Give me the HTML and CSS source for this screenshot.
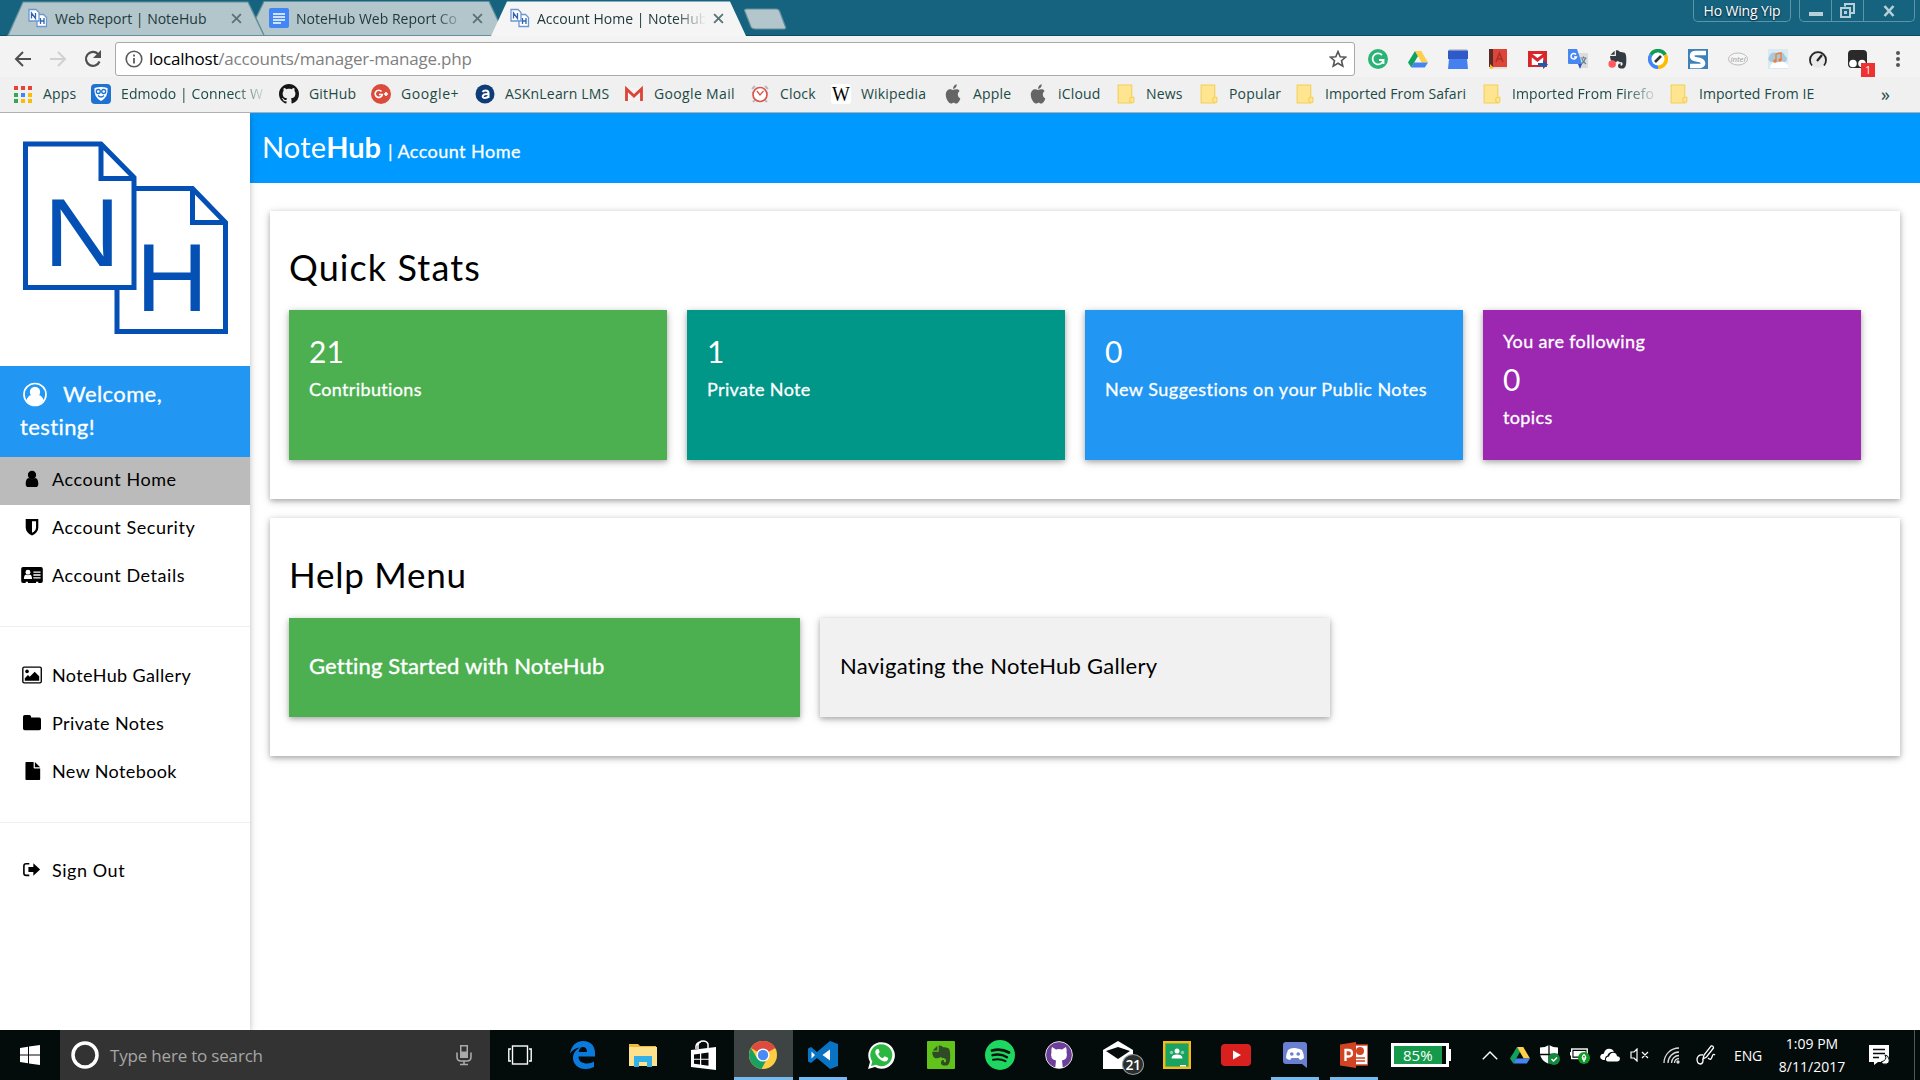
FILE: index.html
```html
<!DOCTYPE html>
<html lang="en">
<head>
<meta charset="utf-8">
<title>Account Home | NoteHub</title>
<link rel="stylesheet" href="styles.css">
</head>
<body>
<svg class="defs" aria-hidden="true">
  <symbol id="nh" viewBox="0 0 20 20"><path d="M1 1.500h7l3 3V13H1zM11 6.500h4.500l3 3V18.500H9V13" fill="#fff" stroke="#6d97cf" stroke-width="1.300"/><path d="M3.500 10.500V5l4 5.500V5M12.500 16v-6M16 16v-6M12.500 13H16" fill="none" stroke="#2c66b5" stroke-width="1.300"/></symbol>
  <symbol id="x" viewBox="0 0 10 10"><path d="M1 1l8 8M9 1L1 9" stroke="#5b7377" stroke-width="1.700"/></symbol>
  <symbol id="drive" viewBox="0 0 20 20"><path d="M7 2L0 13.500 3.300 18.500 10 7z" fill="#11a15e"/><path d="M7 2h6.300L20 13.500h-6.300z" fill="#ffcf48"/><path d="M6 13.500h14L16.800 18.500H3.300z" fill="#4485f3"/></symbol>
  <symbol id="folder" viewBox="0 0 17 19"><path d="M1 1h13v11.500h2v3.500q0 2-2 2H1z" fill="#ffe58f" stroke="#f2cf57"/><path d="M14 12.500q-2 0-2 2.500t2 2.500" fill="none" stroke="#f2cf57"/></symbol>
  <symbol id="apple" viewBox="0 0 14 18"><path d="M7 5.500C4.500 3.500.5 5 .5 9.500S3.500 17.500 5 17.500s1.500-.7 2.500-.7 1.200.7 2.600.7 3-2.500 3.500-4.500C11 12 10.500 7.800 13 6.300 11.500 4.200 9 4.700 7 5.500zM7 4.500C7 2.500 8.500.5 10.300.3 10.500 2.500 9 4.500 7 4.500z" fill="#656565"/></symbol>
  <symbol id="cat" viewBox="0 0 16 16"><path d="M8 0C3.580 0 0 3.580 0 8c0 3.540 2.290 6.530 5.470 7.590.4.070.55-.17.55-.38 0-.19-.01-.82-.01-1.490-2.010.37-2.530-.49-2.690-.94-.09-.23-.48-.94-.82-1.130-.28-.15-.68-.52-.01-.53.63-.01 1.080.58 1.230.82.72 1.210 1.870.87 2.330.66.07-.52.28-.87.51-1.070-1.780-.2-3.640-.89-3.640-3.950 0-.87.31-1.590.82-2.150-.08-.2-.36-1.020.08-2.120 0 0 .67-.21 2.200.82.64-.18 1.320-.27 2-.27s1.360.09 2 .27c1.530-1.040 2.200-.82 2.200-.82.44 1.100.16 1.920.08 2.120.51.56.82 1.270.82 2.150 0 3.070-1.870 3.750-3.650 3.950.29.25.54.73.54 1.480 0 1.070-.01 1.930-.01 2.200 0 .21.15.46.55.38A8.010 8.010 0 0016 8c0-4.420-3.580-8-8-8z"/></symbol>
  <symbol id="elephant" viewBox="0 0 24 24"><path d="M8 2L3 7h5zM9.500 1.500V8.500H2.500C2.500 12 4 15.500 6 15.500c3 .5 5-.5 6-1.500.5 2 3.500 1.500 4.500 2 1.500.5 1.500 4-.5 4-1 0-1.500-1-.5-2.500-2.500-.5-3.500 1-3.500 3 0 2.500 2 3 5 3 4 0 5-4 5-11 0-4-.5-7-2-8-2-.8-4-.8-5.500-1-1-1.500-3-2-5-2z"/></symbol>
</svg>

<div class="tabstrip">
  <svg class="tabshapes" viewBox="0 0 800 36" aria-hidden="true">
    <g stroke="#648f9c" stroke-width="1.200">
      <path d="M264 1.500H489L505 35.500H264L256 18z" fill="#b2c6cb"/>
      <path d="M8 35.500L23 2H248L264 35.500z" fill="#b2c6cb"/>
      <path d="M744.500 10.500q0-1.500 2-1.500h30q2 0 3 2l6 16q.5 2-1.500 2h-29q-3 0-4-2z" fill="#b2c6cb"/>
    </g>
    <path d="M491 36L507 1.500H730L746 36z" fill="#f5f5f5"/>
  </svg>
  <div class="tab"><svg class="fav"><use href="#nh"/></svg><span class="tab-t">Web Report | NoteHub</span><svg class="close"><use href="#x"/></svg></div>
  <div class="tab"><svg class="fav" viewBox="0 0 20 20"><rect width="20" height="20" rx="2" fill="#4285f4"/><path d="M4 6h12M4 9h12M4 12h12M4 15h8" stroke="#fff" stroke-width="1.500"/></svg><span class="tab-t fade">NoteHub Web Report Co</span><svg class="close"><use href="#x"/></svg></div>
  <div class="tab"><svg class="fav"><use href="#nh"/></svg><span class="tab-t fade">Account Home | NoteHub</span><svg class="close"><use href="#x"/></svg></div>
  <div class="wincontrols">
    <div class="user">Ho Wing Yip</div>
    <div class="winbtns">
      <span><svg width="14" height="12"><path d="M0 9h14" stroke="#b7d0d8" stroke-width="4"/></svg></span>
      <span><svg width="15" height="15" fill="none" stroke="#b7d0d8" stroke-width="2"><path d="M5 3.500V1h9v9h-3"/><rect x="1" y="5" width="9" height="9"/><rect x="5" y="9" width="1" height="1"/></svg></span>
      <span><svg width="12" height="12"><path d="M1.500 1l9 10M10.500 1l-9 10" stroke="#b7d0d8" stroke-width="2.600"/></svg></span>
    </div>
  </div>
</div>

<div class="toolbar">
  <svg class="nav" viewBox="0 0 20 20"><path d="M18 10H3M10 3l-7 7 7 7" fill="none" stroke="#4f4f4f" stroke-width="2"/></svg>
  <svg class="nav" viewBox="0 0 20 20"><path d="M2 10h15M10 3l7 7-7 7" fill="none" stroke="#d0d0d0" stroke-width="2"/></svg>
  <svg class="nav" viewBox="0 0 20 20"><path d="M16.500 12.500A7 7 0 1 1 15 5" fill="none" stroke="#4f4f4f" stroke-width="2.200"/><path d="M18 1v8h-8z" fill="#4f4f4f"/></svg>
  <div class="omnibox">
    <svg width="18" height="18" viewBox="0 0 18 18"><circle cx="9" cy="9" r="7.800" fill="none" stroke="#5a5a5a" stroke-width="1.600"/><path d="M9 8v5.500M9 4.500v2" stroke="#5a5a5a" stroke-width="1.800"/></svg>
    <span class="url"><b>localhost</b>/accounts/manager-manage.php</span>
    <svg width="18" height="18" viewBox="0 0 18 18"><path d="M9 1.500l2.200 5.200 5.500.4-4.200 3.600 1.300 5.500L9 13.300l-4.800 2.900 1.300-5.500L1.300 7.100l5.500-.4z" fill="none" stroke="#555" stroke-width="1.600"/></svg>
  </div>
  <div class="exts">
    <svg viewBox="0 0 20 20"><circle cx="10" cy="10" r="10" fill="#27b474"/><path d="M14 6A5.500 5.500 0 1 0 15.500 11H11M15.500 11v4" fill="none" stroke="#fff" stroke-width="1.800"/></svg>
    <svg><use href="#drive"/></svg>
    <svg viewBox="0 0 20 20"><path d="M1 0h18v3H1z" fill="#c5cad4"/><path d="M0 1.500h20V10H0z" fill="#3059c8"/><path d="M1 10h18l1 10H0z" fill="#4480ee"/></svg>
    <svg viewBox="0 0 20 20"><path d="M1 0h4v20H1z" fill="#5a2a26"/><path d="M5 0h14v18H5z" fill="#dd4538"/><path d="M1 18h18v2H1z" fill="#e9e1de"/><path d="M2 15l4 4-4 1z" fill="#fbc02d"/><path d="M8 13l3.500-9L15 13M9.500 10h4" fill="none" stroke="#a9312a" stroke-width="1.500"/></svg>
    <svg viewBox="0 0 20 20"><rect y="2" width="19" height="16" fill="#d8262a"/><path d="M3.500 5h12v11h-12z" fill="#fff"/><path d="M2 17V5l7.500 6L17 5v12" fill="none" stroke="#d8262a" stroke-width="3"/><path d="M10 14h5v-3l5 4.500-5 4.500v-3h-5z" fill="#2a56a8"/></svg>
    <svg viewBox="0 0 20 20"><path d="M9 4h11v15h-9z" fill="#dcdcdc"/><path d="M0 0h9l5 15H1q-1 0-1-1z" fill="#4687f1"/><path d="M10 15h4l-2 5z" fill="#2a56c0"/><path d="M8 5.500A2.800 2.800 0 1 0 8.500 8H6" fill="none" stroke="#fff" stroke-width="1.400"/><path d="M12.500 9h6M15.500 7.500V9M17.500 9q-1 4-4 6M14 10q1 3 4 5" fill="none" stroke="#607d8b" stroke-width="1.100"/></svg>
    <svg viewBox="0 0 24 24"><use href="#elephant" fill="#333b40"/><circle cx="5" cy="18" r="4.500" fill="#ff5a5f"/></svg>
    <svg viewBox="0 0 20 20"><g fill="none" stroke-width="4"><path d="M3 6A8 8 0 0 1 17 6" stroke="#0f9d58"/><path d="M17 6A8 8 0 0 1 10 18" stroke="#ffbb00"/><path d="M10 18A8 8 0 0 1 3 6" stroke="#4285f4"/></g><circle cx="10" cy="10" r="6.500" fill="#fff"/><path d="M7 13l6-6" stroke="#333" stroke-width="2.600"/></svg>
    <svg viewBox="0 0 20 20"><rect width="20" height="20" fill="#3e80b8"/><path d="M18 4H8Q4 4 4 7t5 3.500 6 3-3 3.500H2" fill="none" stroke="#fff" stroke-width="4.500"/></svg>
    <svg viewBox="0 0 20 20"><ellipse cx="10" cy="10" rx="9.500" ry="6" fill="#f6f6f6" stroke="#bbb"/><text x="2.500" y="12.500" class="intel" textLength="15" lengthAdjust="spacingAndGlyphs">intel</text></svg>
    <svg viewBox="0 0 20 20"><path d="M0 0h20v20H0z" fill="#d8eaf4"/><path d="M1 8q2-6 7-4 7-3 9 3 4 3 0 6H3q-4-2-2-5z" fill="#a9c8dc"/><path d="M2 18q1-5 7-4 6-4 11 2v3H2z" fill="#fff"/><path d="M8 12V5l5-1v7" fill="none" stroke="#f47b2c" stroke-width="1.300"/><circle cx="7" cy="12" r="1.700" fill="#f47b2c"/><circle cx="12" cy="11" r="1.700" fill="#f47b2c"/></svg>
    <svg viewBox="0 0 20 20"><circle cx="10" cy="10" r="9" fill="#e9e9e9"/><path d="M4 16.500A8 8 0 1 1 16 16.500" fill="none" stroke="#222" stroke-width="1.800"/><path d="M9 12l5-6" stroke="#222" stroke-width="2.200"/></svg>
    <div class="tamper"><svg viewBox="0 0 20 20"><rect x="0" y="1" width="19" height="18" rx="4" fill="#2a2a2a"/><circle cx="5" cy="14.500" r="3.800" fill="#fff"/><circle cx="14" cy="14.500" r="3.800" fill="#fff"/></svg><span class="badge">1</span></div>
  </div>
  <svg class="dots" width="4" height="20"><g fill="#555"><circle cx="2" cy="4" r="2"/><circle cx="2" cy="10" r="2"/><circle cx="2" cy="16" r="2"/></g></svg>
</div>

<div class="bookmarks">
  <div><svg viewBox="0 0 20 20"><g fill="#ea4335"><path d="M1 2h4v4H1zM8 2h4v4H8zM15 2h4v4h-4z"/></g><path d="M1 9h4v4H1z" fill="#34a853"/><path d="M8 9h4v4H8z" fill="#4285f4"/><path d="M15 9h4v4h-4zM8 15h4v4H8zM15 15h4v4h-4z" fill="#fbbc05"/><path d="M1 15h4v4H1z" fill="#34a853"/></svg>Apps</div>
  <div><svg viewBox="0 0 20 20"><rect width="20" height="20" rx="4" fill="#1e73d2"/><path d="M10 17Q2.500 13 3.500 4q6.500-2 13 0 1 9-6.500 13z" fill="#fff"/><g fill="none" stroke="#1e73d2" stroke-width="1.300"><circle cx="7.300" cy="7.500" r="2"/><circle cx="12.700" cy="7.500" r="2"/><path d="M7 11.500q3 3 6 0"/></g></svg><span class="cut">Edmodo | Connect W</span></div>
  <div><svg viewBox="0 0 16 16"><use href="#cat" fill="#171515"/></svg>GitHub</div>
  <div class="gplus"><svg viewBox="0 0 20 20"><circle cx="10" cy="10" r="10" fill="#db4a3a"/><path d="M10.500 7.500A3.600 3.600 0 1 0 11.300 10.500H8M13 10h4M15 8v4" fill="none" stroke="#fff" stroke-width="1.700"/></svg>Google+</div>
  <div><svg viewBox="0 0 20 20"><circle cx="10" cy="10" r="9.500" fill="#0d3c78"/><path d="M13.500 14V9q0-2.500-3-2.500-2 0-3 1.500M13.500 10c-7-.5-7 4-3.500 4q2.500 0 3.500-2" fill="none" stroke="#fff" stroke-width="2"/></svg>ASKnLearn LMS</div>
  <div class="gmail"><svg viewBox="0 0 20 20"><path d="M1 4h18v13H1z" fill="#f4f4f4"/><path d="M2.500 17V5l7.500 7 7.500-7v12" fill="none" stroke="#db4437" stroke-width="2.800"/></svg>Google Mail</div>
  <div><svg viewBox="0 0 20 20"><path d="M2 5l3-3M18 5l-3-3M5 16l-2 2M15 16l2 2" stroke="#bbb" stroke-width="2"/><circle cx="10" cy="10.500" r="7" fill="#fff" stroke="#d8574d" stroke-width="1.700"/><path d="M7 7l3 4 3.500-4" fill="none" stroke="#d8574d" stroke-width="1.300"/></svg>Clock</div>
  <div><svg viewBox="0 0 20 20"><rect width="20" height="20" rx="3" fill="#fff"/><text x="1" y="16.500" class="wiki" textLength="18" lengthAdjust="spacingAndGlyphs">W</text></svg>Wikipedia</div>
  <div><svg><use href="#apple"/></svg>Apple</div>
  <div><svg><use href="#apple"/></svg>iCloud</div>
  <div><svg><use href="#folder"/></svg>News</div>
  <div><svg><use href="#folder"/></svg>Popular</div>
  <div class="safari"><svg><use href="#folder"/></svg>Imported From Safari</div>
  <div><svg><use href="#folder"/></svg><span class="cut">Imported From Firefo</span></div>
  <div class="safari"><svg><use href="#folder"/></svg>Imported From IE</div>
  <div class="more">»</div>
</div>

<div class="page">
  <aside class="sidebar">
    <div class="logo">
      <svg width="250" height="253" viewBox="0 113 250 253">
        <g fill="none" stroke="#0450b4" stroke-width="5">
          <path d="M136 188.500h56.500L225.500 222.500V331.500H117V290M192.500 188.500v34H225"/>
          <path d="M25.500 144H101l33 33.500V287.500H25.500zM101 144v34.500h33"/>
        </g>
        <text class="mark" x="43.500" y="266" textLength="77" lengthAdjust="spacingAndGlyphs">N</text>
        <text class="mark" x="136" y="311" textLength="72" lengthAdjust="spacingAndGlyphs">H</text>
      </svg>
    </div>
    <div class="welcome"><svg viewBox="0 0 24 24"><circle cx="12" cy="12" r="11" fill="none" stroke="#fff" stroke-width="1.700"/><circle cx="12" cy="9.500" r="5.200" fill="#fff"/><path d="M3.500 18q1-5 5-5.500 3.500 3 7 0 4 .5 5 5.500-3 5-8.500 5T3.500 18z" fill="#fff"/></svg>Welcome,<br>testing!</div>
    <nav>
      <a class="on"><svg viewBox="0 0 24 20"><circle cx="12" cy="5.500" r="4.600"/><path d="M5 15.500Q5 9.500 8.500 9q3.500 2.500 7 0 3.500.5 3.500 6.500 0 3.500-3 3.500H8q-3 0-3-3.500z"/></svg>Account Home</a>
      <a><svg viewBox="0 0 24 20"><path d="M5 1h14v9.500Q19 16 12 19.500 5 16 5 10.500z"/><path d="M12 3.500h4.500v7q0 3.500-4.500 6z" fill="#fff"/></svg>Account Security</a>
      <a><svg viewBox="0 0 24 20"><path d="M0 3q0-2 2-2h20q2 0 2 2v14q0 2-2 2h-3v-1.500h-2.500V19h-9v-1.500H5V19H2q-2 0-2-2z"/><circle cx="7.500" cy="7" r="2.700" fill="#fff"/><path d="M3 14.500q0-4.500 2.500-5 2 1.500 4 0 2.500.5 2.500 5zM13.500 6h8v1.500h-8zM13.500 9.200h8v1.500h-8zM13.500 12.400h8v1.500h-8z" fill="#fff"/></svg>Account Details</a>
      <hr>
      <a class="snug"><svg viewBox="0 0 24 20"><rect x="1.800" y="1.200" width="20.500" height="17.500" rx="1.500" fill="none" stroke="#000" stroke-width="1.500"/><circle cx="6.500" cy="6" r="2"/><path d="M4 16.500v-3l3.500-3.500 2 2 5.500-5.500 5 5v5z"/></svg>NoteHub Gallery</a>
      <a class="snug"><svg viewBox="0 0 24 20"><path d="M2 3q0-2 2-2h5q2 0 2 2v1h9q2 0 2 2v10q0 2-2 2H4q-2 0-2-2z"/></svg>Private Notes</a>
      <a class="snug"><svg viewBox="0 0 24 22"><path d="M4 1q0-1 1-1h9v7q0 1 1 1h7v13q0 1-1 1H5q-1 0-1-1zM15.500 0L22 6.500h-6.500z"/></svg>New Notebook</a>
      <hr>
      <a><svg viewBox="0 0 24 20"><path d="M9 3H5.500Q3 3 3 5.500v8Q3 16 5.500 16H9" fill="none" stroke="#000" stroke-width="1.800"/><path d="M8 6.800h5.500V2.500L21 9.500l-7.500 7v-4.300H8z"/></svg>Sign Out</a>
    </nav>
  </aside>
  <main>
    <header><span class="brand">Note<b>Hub</b></span><span class="crumb">| Account Home</span></header>
    <section class="card">
      <h2 class="qs">Quick Stats</h2>
      <div class="stats">
        <div class="tile green"><div class="num">21</div><div class="lbl">Contributions</div></div>
        <div class="tile teal"><div class="num">1</div><div class="lbl">Private Note</div></div>
        <div class="tile blue"><div class="num">0</div><div class="lbl wide">New Suggestions on your Public Notes</div></div>
        <div class="tile purple"><div class="lbl top">You are following</div><div class="num">0</div><div class="lbl">topics</div></div>
      </div>
    </section>
    <section class="card help">
      <h2>Help Menu</h2>
      <div class="guides">
        <div class="guide green">Getting Started with NoteHub</div>
        <div class="guide grey">Navigating the NoteHub Gallery</div>
      </div>
    </section>
  </main>
</div>

<div class="taskbar">
  <div class="start"><svg width="20" height="20" viewBox="0 0 20 20"><path d="M0 3l8-1.200V9.500H0zM9 1.600L20 0v9.500H9zM0 10.500h8v7.700L0 17zM9 10.500h11V20L9 18.400z" fill="#fff"/></svg></div>
  <div class="search"><svg width="28" height="28" viewBox="0 0 28 28"><circle cx="14" cy="14" r="12" fill="none" stroke="#fff" stroke-width="3.500"/></svg><span>Type here to search</span><svg width="16" height="22" viewBox="0 0 16 22"><rect x="4" y="1" width="8" height="13" fill="#aaa"/><rect x="5.500" y="2.500" width="5" height="5" fill="#333"/><path d="M1 8.500v4.500q0 4 4 4h6q4 0 4-4V8.500M8 17v4M4 20.500h8" fill="none" stroke="#aaa" stroke-width="1.600"/></svg></div>
  <div class="taskview"><svg width="24" height="20" viewBox="0 0 24 20" fill="none" stroke="#fff" stroke-width="1.400"><rect x="4.500" y="1" width="15" height="18"/><path d="M3 4H.8v12H3M21 4h2.200v12H21"/></svg></div>
  <div><svg width="26" height="28" viewBox="0 0 26 28"><path d="M0 12.500C1.500 4 7 0 13 0c8 0 12 5.500 12 12v3.500H8.500c0 5 4 7 8.500 7 3 0 5.500-1 7-2v5.500q-3.500 2-8.500 2C8 28 3 23 3 17c0-5 3-8.500 7-10.500C6 6.500 2.500 9 0 12.500zM8.700 11H17c0-3.500-1.500-5-4-5s-4 2-4.300 5z" fill="#0a7bdc"/></svg></div>
  <div><svg width="28" height="24" viewBox="0 0 28 24"><path d="M0 1h9l2 2h16v20H0z" fill="#f0bb3b"/><path d="M0 4h28v19H0z" fill="#fde18c"/><path d="M5 24V13h18v11h-5v-5h-8v5z" fill="#32b1e8"/></svg></div>
  <div><svg width="28" height="30" viewBox="0 0 28 30"><path d="M1 10l25-3v23L1 27z" fill="#fff"/><path d="M8 9V5q1-4 5-4t5 3v4M6 9V6q1-4 5-4" fill="none" stroke="#fff" stroke-width="1.500"/><path d="M4 14.500l6-.8v5H4zM11.200 13.500l7.300-1v6.200h-7.300zM4 19.800h6v4.800l-6-.8zM11.200 19.800h7.300v6l-7.300-1z" fill="#050b0b"/></svg></div>
  <div class="active run"><svg width="28" height="28" viewBox="0 0 28 28"><circle cx="14" cy="14" r="14" fill="#ffcd41"/><path d="M14 14L2 7a14 14 0 0 1 24.300 0z" fill="#dd4b3e"/><path d="M2 7A14 14 0 0 0 12.500 28L18 18 8 17z" fill="#1aa15f"/><circle cx="14" cy="14" r="6.600" fill="#fff"/><circle cx="14" cy="14" r="5.200" fill="#4a8af4"/></svg></div>
  <div class="run"><svg width="30" height="28" viewBox="0 0 30 28"><path d="M22 0l8 3v22l-8 3L9 17l-6 5-3-1.500V7.500L3 6l6 5z" fill="#0a74c4"/><path d="M22 8.500L14.500 14l7.500 5.500zM3.500 10.500v7L7 14z" fill="#fff"/></svg></div>
  <div><svg width="27" height="27" viewBox="0 0 27 27"><path d="M0 27l2-7A13.300 13.300 0 1 1 7 25z" fill="#fff"/><path d="M3 24l1.300-4.500A11 11 0 1 1 8 22.800z" fill="#2cb742"/><path d="M9 7q-2.500 1.500-1.300 5 3 6 8.500 7.500 3 .5 4-2.500l-.3-1.200-3.200-1.500-2 2q-3-1-4.500-4.300l1.500-2L10.500 7z" fill="#fff"/></svg></div>
  <div><svg width="28" height="28" viewBox="0 0 28 28"><rect width="28" height="28" rx="1" fill="#62c21c"/><svg x="3" y="3" width="22" height="22" viewBox="0 0 24 24"><use href="#elephant" fill="#2e4a26"/></svg></svg></div>
  <div><svg width="30" height="30" viewBox="0 0 30 30"><circle cx="15" cy="15" r="15" fill="#1ed760"/><g fill="none" stroke="#0a130d" stroke-linecap="round"><path d="M7 10.500q9-2.500 17 2" stroke-width="2.800"/><path d="M7.500 15.200q8-2 14.500 2" stroke-width="2.400"/><path d="M8 19.700q7-1.500 12.500 1.500" stroke-width="2"/></g></svg></div>
  <div><svg width="28" height="28" viewBox="0 0 28 28"><circle cx="14" cy="14" r="13.400" fill="#6e3f9a" stroke="#ddd"/><path d="M7 6l4 2.500q3-.8 6 0L21 6q1 3 .5 5 2 7-4.500 8.500l.8 7.500h-7.600l.8-7.500Q4.500 18 6.500 11 6 9 7 6z" fill="#fff"/></svg></div>
  <div class="mail"><svg width="30" height="28" viewBox="0 0 30 28"><path d="M0 9L15 0l15 9v19H0z" fill="#fff"/><path d="M3 10l12 8 12-8-12-4z" fill="#050b0b"/></svg><span>21</span></div>
  <div><svg width="28" height="28" viewBox="0 0 28 28"><rect x="1.200" y="1.200" width="25.600" height="25.600" fill="#1aa260" stroke="#f5ba15" stroke-width="2.400"/><g fill="#fff"><circle cx="14" cy="10" r="2.500"/><path d="M8.500 17.500q0-4 5.500-4t5.500 4z"/><path d="M17 24h6v1.500h-6z"/></g><g fill="#8cd0b0"><circle cx="8.500" cy="11.500" r="1.700"/><circle cx="19.500" cy="11.500" r="1.700"/></g></svg></div>
  <div><svg width="30" height="22" viewBox="0 0 30 22"><rect width="30" height="22" rx="4" fill="#d8211f"/><path d="M12 6.500v9l8-4.500z" fill="#fff"/></svg></div>
  <div class="run"><svg width="24" height="26" viewBox="0 0 24 26"><path d="M3 0h18q3 0 3 3v23l-5-4H3q-3 0-3-3V3q0-3 3-3z" fill="#6a7fd0"/><path d="M5 8q3-2.500 7-2t7 2q2 4 2 8-2 2-4 2l-1.500-2h-7L7 18q-2 0-4-2 0-4 2-8z" fill="#fff"/><circle cx="8.800" cy="12" r="1.800" fill="#6a7fd0"/><circle cx="15.200" cy="12" r="1.800" fill="#6a7fd0"/></svg></div>
  <div class="run"><svg width="28" height="26" viewBox="0 0 28 26"><path d="M14 3h14v20H14z" fill="#fff" stroke="#d04423" stroke-width="1.500"/><circle cx="20" cy="9" r="4" fill="#d04423"/><path d="M16 16h9M16 19h9" stroke="#d04423" stroke-width="1.500"/><path d="M0 2.500L16 0v26L0 23.500z" fill="#d04423"/><path d="M5.500 19V8h3q3.500 0 3.500 3.300T8.500 14.500h-3" fill="none" stroke="#fff" stroke-width="2.300"/></svg></div>
  <div class="battery"><span>85%</span><i></i></div>
  <div><svg width="16" height="9"><path d="M.8 8.200L8 1l7.200 7.200" fill="none" stroke="#fff" stroke-width="1.400"/></svg></div>
  <div><svg width="20" height="20"><use href="#drive"/></svg></div>
  <div><svg width="20" height="20" viewBox="0 0 20 20"><path d="M9 0q4 2.500 9 2.500V9q-1 7-9 10Q1 16 0 9V2.500Q5 2.500 9 0z" fill="#fff"/><path d="M9 0v19M0 9.500h18" stroke="#050b0b" stroke-width="1.300"/><circle cx="14" cy="14" r="6" fill="#128a3e"/><path d="M11.500 14l2 2 3.500-3.500" fill="none" stroke="#fff" stroke-width="1.400"/></svg></div>
  <div><svg width="20" height="18" viewBox="0 0 20 18"><rect x="1.700" y="3" width="15.500" height="9.500" fill="none" stroke="#fff" stroke-width="1.400"/><path d="M3.500 5h12v5.500h-12zM0 6h1.500v3.500H0z" fill="#fff"/><circle cx="14" cy="12" r="6" fill="#0f9a24"/><path d="M14 8.500q3.500 3 0 6-3.500-3 0-6zM14 11v5" fill="none" stroke="#fff" stroke-width="1.200"/></svg></div>
  <div><svg width="20" height="14" viewBox="0 0 20 14"><path d="M3 12Q-.5 11 .3 8q1-2.500 3.500-2.200Q5 .5 9.500.8q3 0 4.500 3-5-.5-6.500 3.700-3 .8-2.500 4.500z" fill="#fff"/><path d="M8 13.500q-2.500-.5-2-3 .7-2 3-2 1-4 4.500-3.800 3 .3 3.500 3.500 3 .3 3 2.800-.3 2-2.500 2.500z" fill="#fff"/></svg></div>
  <div><svg width="19" height="14" viewBox="0 0 19 14" fill="none" stroke="#fff" stroke-width="1.200"><path d="M1 4h3l3-3v12L4 10H1zM12 4l6 6M18 4l-6 6"/></svg></div>
  <div><svg width="17" height="17" viewBox="0 0 17 17" fill="none" stroke="#ddd" stroke-width="1.300"><path d="M1 16A15 15 0 0 1 16 1M5 16A11 11 0 0 1 16 5M8.500 16A7.500 7.500 0 0 1 16 8.500M11.500 16A4.500 4.500 0 0 1 16 11.500"/><circle cx="15" cy="15" r="1" fill="#fff"/></svg></div>
  <div><svg width="20" height="20" viewBox="0 0 20 20" fill="none" stroke="#fff" stroke-width="1.300"><path d="M7 14l1-4 7-9q2.500-.5 2.500 2L10.500 12zM7 10q-5-1-6 4 0 5 3.500 5 3-.5 2.500-5M12 13q3 3 4-1t3-2"/></svg></div>
  <div class="lang">ENG</div>
  <div class="clock">1:09 PM<br>8/11/2017</div>
  <div><svg width="21" height="21" viewBox="0 0 21 21"><path d="M0 0h20v17H9l-4 3v-3H0z" fill="#fff"/><path d="M4 4.500h12M4 8.500h12M4 12.500h6" stroke="#050b0b" stroke-width="1.400"/><path d="M16 10q3 5-4 7 2 3 5.500 2t2.500-5-4-4z" fill="#fff" stroke="#050b0b"/></svg></div>
  <div class="peek"></div>
</div>
</body>
</html>
```
FILE: styles.css
```css
* { box-sizing: border-box; }
body { margin: 0; width: 1920px; height: 1080px; overflow: hidden; display: flex; flex-direction: column; background: #fff; font-family: "Open Sans", sans-serif; font-size: 14px; }
svg { display: block; flex: none; }
.defs { position: absolute; width: 0; height: 0; }

/* browser chrome */
.tabstrip { position: relative; height: 36px; background: #15637f; display: flex; padding-left: 28px; border-bottom: 1px solid #0f4a5f; }
.tabshapes { position: absolute; left: 0; top: 0; width: 800px; height: 36px; }
.tab { position: relative; width: 241px; padding-right: 27px; height: 36px; display: flex; align-items: center; gap: 7px; color: #21393c; }
.tab .fav { width: 20px; height: 20px; }
.tab .fav + .tab-t { flex: 1; white-space: nowrap; overflow: hidden; }
.close { width: 11px; height: 11px; }
.fade { -webkit-mask-image: linear-gradient(90deg, #000 82%, transparent 100%); mask-image: linear-gradient(90deg, #000 82%, transparent 100%); }
.wincontrols { margin-left: auto; padding-right: 5px; display: flex; gap: 8px; align-items: flex-start; }
.user, .winbtns { border: 1px solid #5e94a8; border-top: 0; border-radius: 0 0 5px 5px; height: 22px; }
.user { width: 98px; text-align: center; color: #fff; line-height: 22px; letter-spacing: -.16px; text-shadow: 0 1px 2px #012; }
.winbtns { display: grid; grid-template-columns: 31px 32px 51px; }
.winbtns span { display: flex; align-items: center; justify-content: center; }
.winbtns span + span { border-left: 1px solid #5e94a8; }

.toolbar { height: 41px; background: #f3f3f3; display: flex; align-items: center; padding: 4px 20px 0 13px; }
.nav { width: 20px; height: 20px; margin-right: 15px; }
.nav:nth-child(3) { margin-right: 12px; }
.omnibox { width: 1240px; height: 34px; background: #fff; border: 1px solid #a9a9a9; border-radius: 3px; display: flex; align-items: center; gap: 6px; padding: 0 7px 0 9px; }
.url { flex: 1; font-size: 17px; letter-spacing: -.21px; color: #808080; }
.url b { font-weight: 400; color: #000; }
.exts { display: flex; gap: 20px; margin-left: 13px; }
.exts svg { width: 20px; height: 20px; }
.intel { font: italic 7px "Open Sans", sans-serif; fill: #999; }
.tamper { position: relative; }
.badge { position: absolute; left: 13px; top: 14px; width: 14px; height: 14px; background: #ee3131; color: #fff; font-size: 10px; line-height: 14px; text-align: center; }
.dots { margin-left: auto; }

.bookmarks { height: 36px; background: #f0f0f0; border-bottom: 1px solid #b0b0b0; display: grid; padding-left: 13px; grid-template-columns: 78px 188px 92px 104px 149px 126px 81px 112px 85px 88px 83px 96px 187px 187px 212px 40px; color: #1c4a45; letter-spacing: .17px; }
.bookmarks div { display: flex; align-items: center; gap: 10px; white-space: nowrap; padding-bottom: 2px; }
.bookmarks svg { width: 20px; height: 20px; }
.bookmarks .gplus { letter-spacing: .6px; }
.bookmarks .gmail { letter-spacing: .35px; }
.bookmarks .safari { letter-spacing: .06px; }
.cut { letter-spacing: .1px; -webkit-mask-image: linear-gradient(90deg, #000 80%, rgba(0,0,0,.15) 100%); mask-image: linear-gradient(90deg, #000 80%, rgba(0,0,0,.15) 100%); }
.wiki { font: 20px "Liberation Serif", serif; fill: #000; }
.more { font-size: 18px; }

/* NoteHub */
.page { flex: 1; display: flex; font-family: Lato, sans-serif; color: #000; min-height: 0; }
.sidebar { position: relative; width: 250px; background: #fff; box-shadow: 0 2px 5px rgba(0,0,0,.16), 0 2px 10px rgba(0,0,0,.12); clip-path: inset(0 -12px 0 0); z-index: 1; }
.logo { height: 253px; }
.mark { font: 97px "Liberation Sans", sans-serif; fill: #0450b4; }
.welcome { height: 91px; padding: 11px 20px 0; background: #2196f3; color: #fff; font-size: 22px; line-height: 33px; letter-spacing: .4px; -webkit-text-stroke: .3px; }
.welcome svg { display: inline-block; width: 24px; height: 25px; margin: 0 16px 0 3px; vertical-align: -5px; }
nav a { height: 48px; display: flex; align-items: center; gap: 8px; padding: 0 20px 4px 21px; font-size: 18px; letter-spacing: .55px; }
nav a svg { width: 22px; height: 18px; margin-right: 1px; }
nav .snug { letter-spacing: .38px; }
nav .on { background: #bbb; }
hr { border: 0; height: 1px; background: #eee; margin: 25px 0 25.500px; }
main { flex: 1; }
header { height: 70px; background: #09f; color: #fff; padding-left: 12px; display: flex; align-items: baseline; line-height: 68px; }
.brand { font-size: 29px; letter-spacing: .15px; }
.brand b { letter-spacing: 0; }
.crumb { font-size: 18px; letter-spacing: .45px; margin-left: 7px; -webkit-text-stroke: .3px; }
.card { margin: 28px 20px 0; height: 288px; padding: 14px 0 0 19px; box-shadow: 0 2px 5px rgba(0,0,0,.26), 0 2px 10px rgba(0,0,0,.14); }
.help { margin-top: 19px; height: 238px; }
h2 { margin: 0; font-weight: 400; font-size: 35px; line-height: 85px; letter-spacing: .75px; }
.qs { font-size: 36px; letter-spacing: 1.100px; }
.help h2 { margin-bottom: 1px; }
.stats { display: grid; grid-template-columns: repeat(4, 378px); gap: 20px; }
.tile, .guide { color: #fff; padding-left: 20px; box-shadow: 0 2px 5px rgba(0,0,0,.26), 0 2px 10px rgba(0,0,0,.14); }
.tile { height: 150px; padding-top: 19px; }
.green { background: #4caf50; }
.teal { background: #009688; }
.blue { background: #2196f3; }
.purple { background: #9c27b0; }
.num { font-size: 30px; line-height: 45px; }
.lbl { font-size: 18px; line-height: 30px; letter-spacing: .36px; -webkit-text-stroke: .3px; }
.wide { letter-spacing: .49px; }
.top { line-height: 24px; margin-bottom: 4px; }
.guides { display: grid; grid-template-columns: 511px 510px; gap: 20px; }
.guide { height: 99px; line-height: 96px; font-size: 22px; letter-spacing: .18px; -webkit-text-stroke: .4px; }
.grey { background: #f1f1f1; color: #000; letter-spacing: .28px; -webkit-text-stroke: 0; }

/* taskbar */
.taskbar { height: 50px; background: #040b0b; display: grid; grid-template-columns: 60px 430px 63px 60px 60px 61px repeat(11, 59px) 92px 30px 30px 30px 30px 30px 28px 36px 33px 52px 76px 58px 1fr; color: #fff; }
.taskbar > div { display: flex; align-items: center; justify-content: center; }
.taskbar > .search { background: #333; justify-content: flex-start; padding: 0 18px 0 11px; font-size: 17px; color: #a6a6a6; letter-spacing: -.19px; }
.search span { flex: 1; margin-left: 11px; }
.taskbar > .taskview { padding-right: 3px; }
.taskbar > .run { background: linear-gradient(#76b9ed, #76b9ed) center bottom / 48px 3px no-repeat; }
.taskbar > .active { background: linear-gradient(#76b9ed, #76b9ed) center bottom / 59px 3px no-repeat #3e4444; padding-right: 2px; }
.mail { position: relative; }
.mail span { position: absolute; left: 34px; top: 24px; width: 22px; height: 21px; border-radius: 50%; background: #2c2f2f; border: 1px solid #999; font-size: 14px; line-height: 19px; text-align: center; font-weight: 600; letter-spacing: -.5px; }
.taskbar > .battery { justify-content: flex-start; padding-left: 8px; }
.battery span { width: 58px; height: 24px; border: 3px solid #fff; background: linear-gradient(90deg, #159a4b 48px, #040b0b 48px); font-size: 15px; line-height: 18px; padding-left: 9px; }
.battery i { width: 2px; height: 12px; background: #fff; }
.lang { letter-spacing: -.2px; }
.clock { line-height: 23px; text-align: center; }
.taskbar > .peek { border-left: 1px solid #555; margin-left: 6px; }
```
